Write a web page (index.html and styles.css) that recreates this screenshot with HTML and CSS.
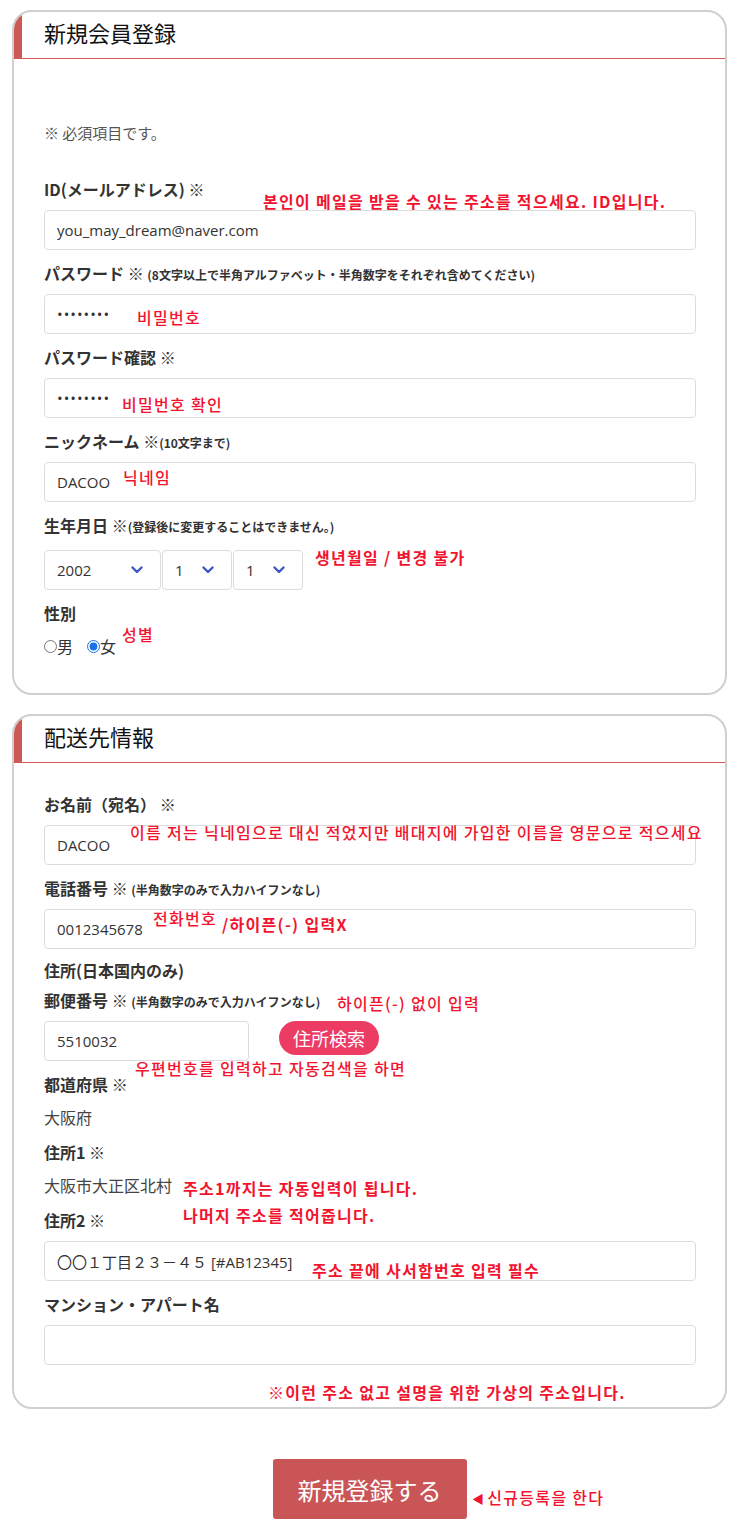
FILE: index.html
```html
<!DOCTYPE html>
<html lang="ja">
<head>
<meta charset="utf-8">
<title>新規会員登録</title>
<link rel="stylesheet" href="styles.css">
</head>
<body>
<div class="page">
  <section class="card card-member">
    <h2 class="card-title">新規会員登録</h2>
    <div class="card-body">
      <p class="note">※ 必須項目です。</p>
      <div class="field">
        <label class="label">ID(メールアドレス) <span class="req">※</span></label>
        <input class="input" type="text" value="you_may_dream@naver.com" readonly>
      </div>
      <div class="field">
        <label class="label">パスワード <span class="req">※</span> <small>(8文字以上で半角アルファベット・半角数字をそれぞれ含めてください)</small></label>
        <input class="input input-pw" type="password" value="12345678" readonly>
      </div>
      <div class="field">
        <label class="label">パスワード確認 <span class="req">※</span></label>
        <input class="input input-pw" type="password" value="12345678" readonly>
      </div>
      <div class="field">
        <label class="label">ニックネーム <span class="req">※</span><small>(10文字まで)</small></label>
        <input class="input" type="text" value="DACOO" readonly>
      </div>
      <div class="field field-birth">
        <label class="label">生年月日 <span class="req">※</span><small>(登録後に変更することはできません。)</small></label>
        <div class="selects">
          <div class="select select-year"><span>2002</span><svg class="chev" width="12" height="8" viewBox="0 0 12 8"><path d="M1.5 1.5 L6 6 L10.5 1.5" fill="none" stroke="#3d55c6" stroke-width="2.4" stroke-linecap="round" stroke-linejoin="round"/></svg></div>
          <div class="select select-small"><span>1</span><svg class="chev" width="12" height="8" viewBox="0 0 12 8"><path d="M1.5 1.5 L6 6 L10.5 1.5" fill="none" stroke="#3d55c6" stroke-width="2.4" stroke-linecap="round" stroke-linejoin="round"/></svg></div>
          <div class="select select-small"><span>1</span><svg class="chev" width="12" height="8" viewBox="0 0 12 8"><path d="M1.5 1.5 L6 6 L10.5 1.5" fill="none" stroke="#3d55c6" stroke-width="2.4" stroke-linecap="round" stroke-linejoin="round"/></svg></div>
        </div>
      </div>
      <div class="field field-last">
        <label class="label">性別</label>
        <div class="radios">
          <label class="radio"><input type="radio" name="sex">男</label>
          <label class="radio"><input type="radio" name="sex" checked>女</label>
        </div>
      </div>
    </div>
  </section>

  <section class="card card-ship">
    <h2 class="card-title">配送先情報</h2>
    <div class="card-body">
      <div class="field">
        <label class="label">お名前（宛名） <span class="req">※</span></label>
        <input class="input" type="text" value="DACOO" readonly>
      </div>
      <div class="field">
        <label class="label">電話番号 <span class="req">※</span> <small>(半角数字のみで入力ハイフンなし)</small></label>
        <input class="input" type="text" value="0012345678" readonly>
      </div>
      <div class="group-title">住所(日本国内のみ)</div>
      <div class="field">
        <label class="label">郵便番号 <span class="req">※</span> <small>(半角数字のみで入力ハイフンなし)</small></label>
        <div class="zip-row">
          <input class="input input-zip" type="text" value="5510032" readonly>
          <button class="btn-search" type="button">住所検索</button>
        </div>
      </div>
      <div class="field">
        <label class="label">都道府県 <span class="req">※</span></label>
        <div class="value">大阪府</div>
      </div>
      <div class="field">
        <label class="label">住所1 <span class="req">※</span></label>
        <div class="value">大阪市大正区北村</div>
      </div>
      <div class="field">
        <label class="label">住所2 <span class="req">※</span></label>
        <input class="input" type="text" value="〇〇１丁目２３－４５ [#AB12345]" readonly>
      </div>
      <div class="field field-last">
        <label class="label">マンション・アパート名</label>
        <input class="input" type="text" value="" readonly>
      </div>
    </div>
  </section>

  <div class="submit-row">
    <button class="btn-submit" type="button">新規登録する</button>
  </div>

  <div class="memo memo-bold" style="left:263px;top:191px">본인이 메일을 받을 수 있는 주소를 적으세요. ID입니다.</div>
  <div class="memo" style="left:137px;top:307px">비밀번호</div>
  <div class="memo" style="left:122px;top:394px">비밀번호 확인</div>
  <div class="memo" style="left:123px;top:467px">닉네임</div>
  <div class="memo memo-bold" style="left:315px;top:547px">생년월일 / 변경 불가</div>
  <div class="memo" style="left:122px;top:624px">성별</div>
  <div class="memo" style="left:130px;top:822px">이름 저는 닉네임으로 대신 적었지만 배대지에 가입한 이름을 영문으로 적으세요</div>
  <div class="memo" style="left:153px;top:908px">전화번호</div>
  <div class="memo memo-bold" style="left:222px;top:914px">/하이픈(-) 입력X</div>
  <div class="memo" style="left:337px;top:993px">하이픈(-) 없이 입력</div>
  <div class="memo" style="left:135px;top:1058px">우편번호를 입력하고 자동검색을 하면</div>
  <div class="memo memo-bold" style="left:183px;top:1178px">주소1까지는 자동입력이 됩니다.</div>
  <div class="memo memo-bold" style="left:183px;top:1205px">나머지 주소를 적어줍니다.</div>
  <div class="memo memo-bold" style="left:312px;top:1260px">주소 끝에 사서함번호 입력 필수</div>
  <div class="memo memo-bold" style="left:268px;top:1382px">※이런 주소 없고 설명을 위한 가상의 주소입니다.</div>
  <div class="memo" style="left:472px;top:1487px"><span class="tri">◀</span>신규등록을 한다</div>
</div>
</body>
</html>
```

FILE: styles.css
```css
* { box-sizing: border-box; }

body {
  margin: 0;
  background: #fff;
  color: #333;
  font-family: "Noto Sans CJK JP", "Noto Sans", sans-serif;
}

.page {
  position: relative;
  width: 745px;
  height: 1538px;
  padding: 10px 18px 0 12px;
  overflow: hidden;
}

.card {
  border: 2px solid #cfcfcf;
  border-radius: 20px;
  overflow: hidden;
  background: #fff;
}

.card + .card { margin-top: 19px; }

.card-title {
  margin: 0;
  height: 47px;
  border-left: 8px solid #cd5858;
  border-bottom: 1px solid #d65a5a;
  padding-left: 22px;
  font-size: 22px;
  font-weight: 400;
  line-height: 41px;
  color: #111;
}

.card-body { padding: 64px 29px 35px 30px; }
.card-ship .card-body { padding-top: 29px; padding-bottom: 42px; }

.note {
  margin: 0 0 34px;
  font-size: 15px;
  line-height: 20px;
  color: #555;
}

.field { margin-bottom: 11px; }
.field-last { margin-bottom: 0; }

.label {
  display: block;
  height: 24px;
  margin-bottom: 9px;
  font-size: 16px;
  font-weight: 700;
  line-height: 24px;
  color: #333;
}
.label .req { font-weight: 400; }
.label small { font-size: 12px; font-weight: 700; line-height: 1; }
.field-birth .label { margin-bottom: 13px; }

.input {
  display: block;
  width: 100%;
  height: 40px;
  margin: 0;
  padding: 0 12px;
  border: 1px solid #dcdcdc;
  border-radius: 4px;
  background: #fff;
  font-family: "Open Sans", "Noto Sans CJK JP", sans-serif;
  font-size: 15px;
  color: #333;
  outline: none;
}
.input-pw { font-size: 15px; letter-spacing: 1px; }

.selects { display: flex; gap: 1px; }
.select {
  display: flex;
  align-items: center;
  justify-content: space-between;
  height: 40px;
  padding: 0 17px 0 12px;
  border: 1px solid #dcdcdc;
  border-radius: 4px;
  font-family: "Open Sans", sans-serif;
  font-size: 15px;
  color: #333;
}
.select-year { width: 117px; }
.select-small { width: 70px; }
.chev { display: block; }

.radios {
  display: flex;
  align-items: center;
  height: 24px;
  margin-top: 5px;
  font-size: 16px;
  color: #333;
}
.radio { display: flex; align-items: center; margin-right: 14px; }
.radio input {
  width: 13px;
  height: 13px;
  margin: 0;
  accent-color: #1a73e8;
}

.group-title {
  height: 24px;
  margin: -2px 0 6px;
  font-size: 16px;
  font-weight: 700;
  line-height: 24px;
}

.zip-row { display: flex; align-items: flex-start; gap: 30px; }
.input-zip { width: 205px; }
.btn-search {
  height: 34px;
  width: 100px;
  padding: 0;
  border: none;
  border-radius: 17px;
  background: #ec3c64;
  color: #fff;
  font-family: "Noto Sans CJK JP", sans-serif;
  font-size: 18px;
  line-height: 34px;
}

.value {
  height: 24px;
  font-size: 16px;
  line-height: 24px;
  color: #444;
}

.submit-row {
  display: flex;
  justify-content: center;
  margin-top: 50px;
}
.btn-submit {
  width: 194px;
  height: 60px;
  border: none;
  border-radius: 3px;
  background: #c95557;
  color: #fff;
  font-family: "Noto Sans CJK JP", sans-serif;
  font-size: 24px;
}

.memo {
  position: absolute;
  white-space: nowrap;
  font-family: "Noto Sans CJK KR", sans-serif;
  font-size: 16px;
  line-height: 20px;
  letter-spacing: 1.3px;
  font-weight: 500;
  color: #f2142e;
}
.memo-bold { font-weight: 700; }
.tri { font-size: 12px; margin-right: 2px; }
```
